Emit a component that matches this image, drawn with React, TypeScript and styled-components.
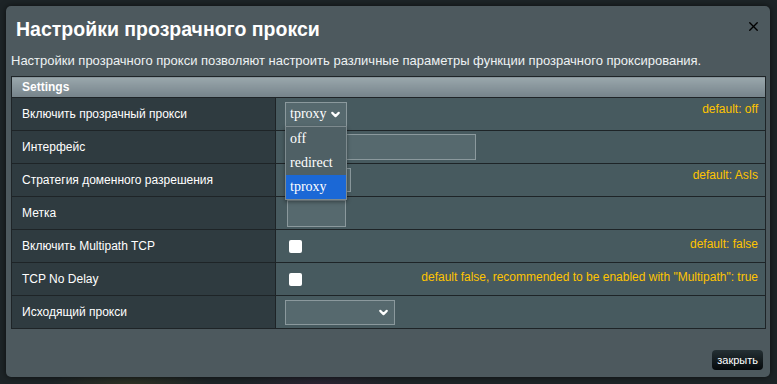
import React from 'react';
import styled, { createGlobalStyle } from 'styled-components';
import { ChevronDown, X } from 'lucide-react';

// -----------------------------------------------------------------------------
// Global
// -----------------------------------------------------------------------------
const GlobalStyle = createGlobalStyle`
  html, body {
    margin: 0;
    padding: 0;
    background: #1d2427;
    font-family: "Liberation Sans", Arial, sans-serif;
  }
  * { box-sizing: border-box; }
`;

// -----------------------------------------------------------------------------
// Layout
// -----------------------------------------------------------------------------
const Backdrop = styled.div`
  width: 777px;
  height: 384px;
  padding: 6px 7px 7px 6px;
  background:
    radial-gradient(ellipse 80px 14px at 130px 384px, rgba(120, 110, 20, 0.18), transparent),
    radial-gradient(ellipse 80px 14px at 320px 384px, rgba(100, 30, 100, 0.18), transparent),
    #1d2427;
  overflow: hidden;
`;

const Modal = styled.div`
  height: 100%;
  background: #4d595e;
  border-radius: 5px;
  display: flex;
  flex-direction: column;
  padding: 0 4px 0 5px;
  box-shadow: 0 0 6px rgba(0, 0, 0, 0.6);
`;

const Header = styled.div`
  display: flex;
  justify-content: space-between;
  align-items: center;
  padding: 8px 5px 0 5px;
  height: 38px;
`;

const Title = styled.h2`
  margin: 0;
  font-size: 19.5px;
  font-weight: bold;
  color: #ffffff;
`;

const CloseIcon = styled.button`
  background: none;
  border: none;
  padding: 0;
  display: flex;
  color: #000;
  margin-top: -6px;
  cursor: pointer;
`;

const Description = styled.p`
  margin: 9px 0 8px 0;
  font-size: 13px;
  color: #eef2f3;
`;

const Table = styled.table`
  width: 755px;
  border-collapse: collapse;
  border: 1px solid #1e2427;
`;

const HeadCell = styled.th`
  height: 21px;
  padding: 0 10px;
  text-align: left;
  font-size: 12px;
  font-weight: bold;
  color: #ffffff;
  background: linear-gradient(#9aa7ac, #75838a);
  border-bottom: 1px solid #1e2427;
`;

const Row = styled.tr`
  height: 33px;
  border-bottom: 1px solid #1e2427;
`;

const LabelCell = styled.td`
  width: 264px;
  padding: 0 10px;
  font-size: 12px;
  color: #ffffff;
  background: #2f3b40;
  border-right: 1px solid #1e2427;
  vertical-align: middle;
`;

const ValueCell = styled.td`
  padding: 0 7px 0 9px;
  background: #475a5f;
  vertical-align: middle;
`;

const Hint = styled.span`
  float: right;
  font-size: 12px;
  color: #ffc400;
  margin-top: 0;
`;

const Control = styled.div`
  position: relative;
  display: inline-block;
  vertical-align: middle;
`;

const SelectBox = styled.div<{ $width: number }>`
  width: ${(p) => p.$width}px;
  height: 25px;
  display: flex;
  align-items: center;
  justify-content: space-between;
  padding: 0 4px 0 4px;
  background: #56696e;
  border: 1px solid #8b999d;
  font-family: "Liberation Serif", "Times New Roman", serif;
  font-size: 14px;
  color: #ffffff;
`;

const TextInput = styled.div<{ $width: number; $height: number }>`
  width: ${(p) => p.$width}px;
  height: ${(p) => p.$height}px;
  margin-left: 2px;
  background: #56696e;
  border: 1px solid #8b999d;
`;

const Checkbox = styled.span`
  display: inline-block;
  width: 13px;
  height: 13px;
  margin: 0 0 0 4px;
  background: #ffffff;
  border-radius: 2px;
  vertical-align: middle;
`;

const OptionList = styled.ul`
  position: absolute;
  top: 24px;
  left: 0;
  width: 62px;
  margin: 0;
  padding: 0;
  list-style: none;
  background: #4f6065;
  border: 1px solid #7d8a8e;
  box-shadow: 0 2px 4px rgba(0, 0, 0, 0.4);
  z-index: 5;
`;

const Option = styled.li<{ $active?: boolean }>`
  height: 24px;
  line-height: 24px;
  padding: 0 4px;
  font-family: "Liberation Serif", "Times New Roman", serif;
  font-size: 14px;
  color: #ffffff;
  background: ${(p) => (p.$active ? '#1b68d6' : 'transparent')};
`;

const Footer = styled.div`
  flex: 1;
  display: flex;
  justify-content: flex-end;
  align-items: flex-end;
  padding: 0 3px 7px 0;
`;

const Button = styled.button`
  height: 20px;
  padding: 0 5px;
  font-family: "Liberation Sans", Arial, sans-serif;
  font-size: 11px;
  color: #ffffff;
  background: linear-gradient(#243034, #05090b);
  border: none;
  border-radius: 4px;
  cursor: pointer;
`;

// -----------------------------------------------------------------------------
// Component
// -----------------------------------------------------------------------------
const Select = ({ value, width, open }: { value: string; width: number; open?: boolean }) => (
  <Control>
    <SelectBox $width={width}>
      <span>{value}</span>
      <ChevronDown size={13} strokeWidth={4} color="#ffffff" />
    </SelectBox>
    {open && (
      <OptionList>
        <Option>off</Option>
        <Option>redirect</Option>
        <Option $active>tproxy</Option>
      </OptionList>
    )}
  </Control>
);

const App = (): JSX.Element => (
  <>
    <GlobalStyle />
    <Backdrop>
      <Modal>
        <Header>
          <Title>Настройки прозрачного прокси</Title>
          <CloseIcon aria-label="close">
            <X size={15} strokeWidth={2.2} />
          </CloseIcon>
        </Header>
        <Description>
          Настройки прозрачного прокси позволяют настроить различные параметры функции прозрачного проксирования.
        </Description>
        <Table>
          <thead>
            <tr>
              <HeadCell colSpan={2}>Settings</HeadCell>
            </tr>
          </thead>
          <tbody>
            <Row>
              <LabelCell>Включить прозрачный прокси</LabelCell>
              <ValueCell>
                <Hint>default: off</Hint>
                <Select value="tproxy" width={62} open />
              </ValueCell>
            </Row>
            <Row>
              <LabelCell>Интерфейс</LabelCell>
              <ValueCell>
                <TextInput $width={189} $height={26} />
              </ValueCell>
            </Row>
            <Row>
              <LabelCell>Стратегия доменного разрешения</LabelCell>
              <ValueCell>
                <Hint>default: AsIs</Hint>
                <Control>
                  <TextInput $width={64} $height={24} />
                </Control>
              </ValueCell>
            </Row>
            <Row>
              <LabelCell>Метка</LabelCell>
              <ValueCell>
                <TextInput $width={59} $height={27} />
              </ValueCell>
            </Row>
            <Row>
              <LabelCell>Включить Multipath TCP</LabelCell>
              <ValueCell>
                <Hint>default: false</Hint>
                <Checkbox />
              </ValueCell>
            </Row>
            <Row>
              <LabelCell>TCP No Delay</LabelCell>
              <ValueCell>
                <Hint>default false, recommended to be enabled with "Multipath": true</Hint>
                <Checkbox />
              </ValueCell>
            </Row>
            <Row>
              <LabelCell>Исходящий прокси</LabelCell>
              <ValueCell>
                <Select value="" width={110} />
              </ValueCell>
            </Row>
          </tbody>
        </Table>
        <Footer>
          <Button>закрыть</Button>
        </Footer>
      </Modal>
    </Backdrop>
  </>
);

export default App;
